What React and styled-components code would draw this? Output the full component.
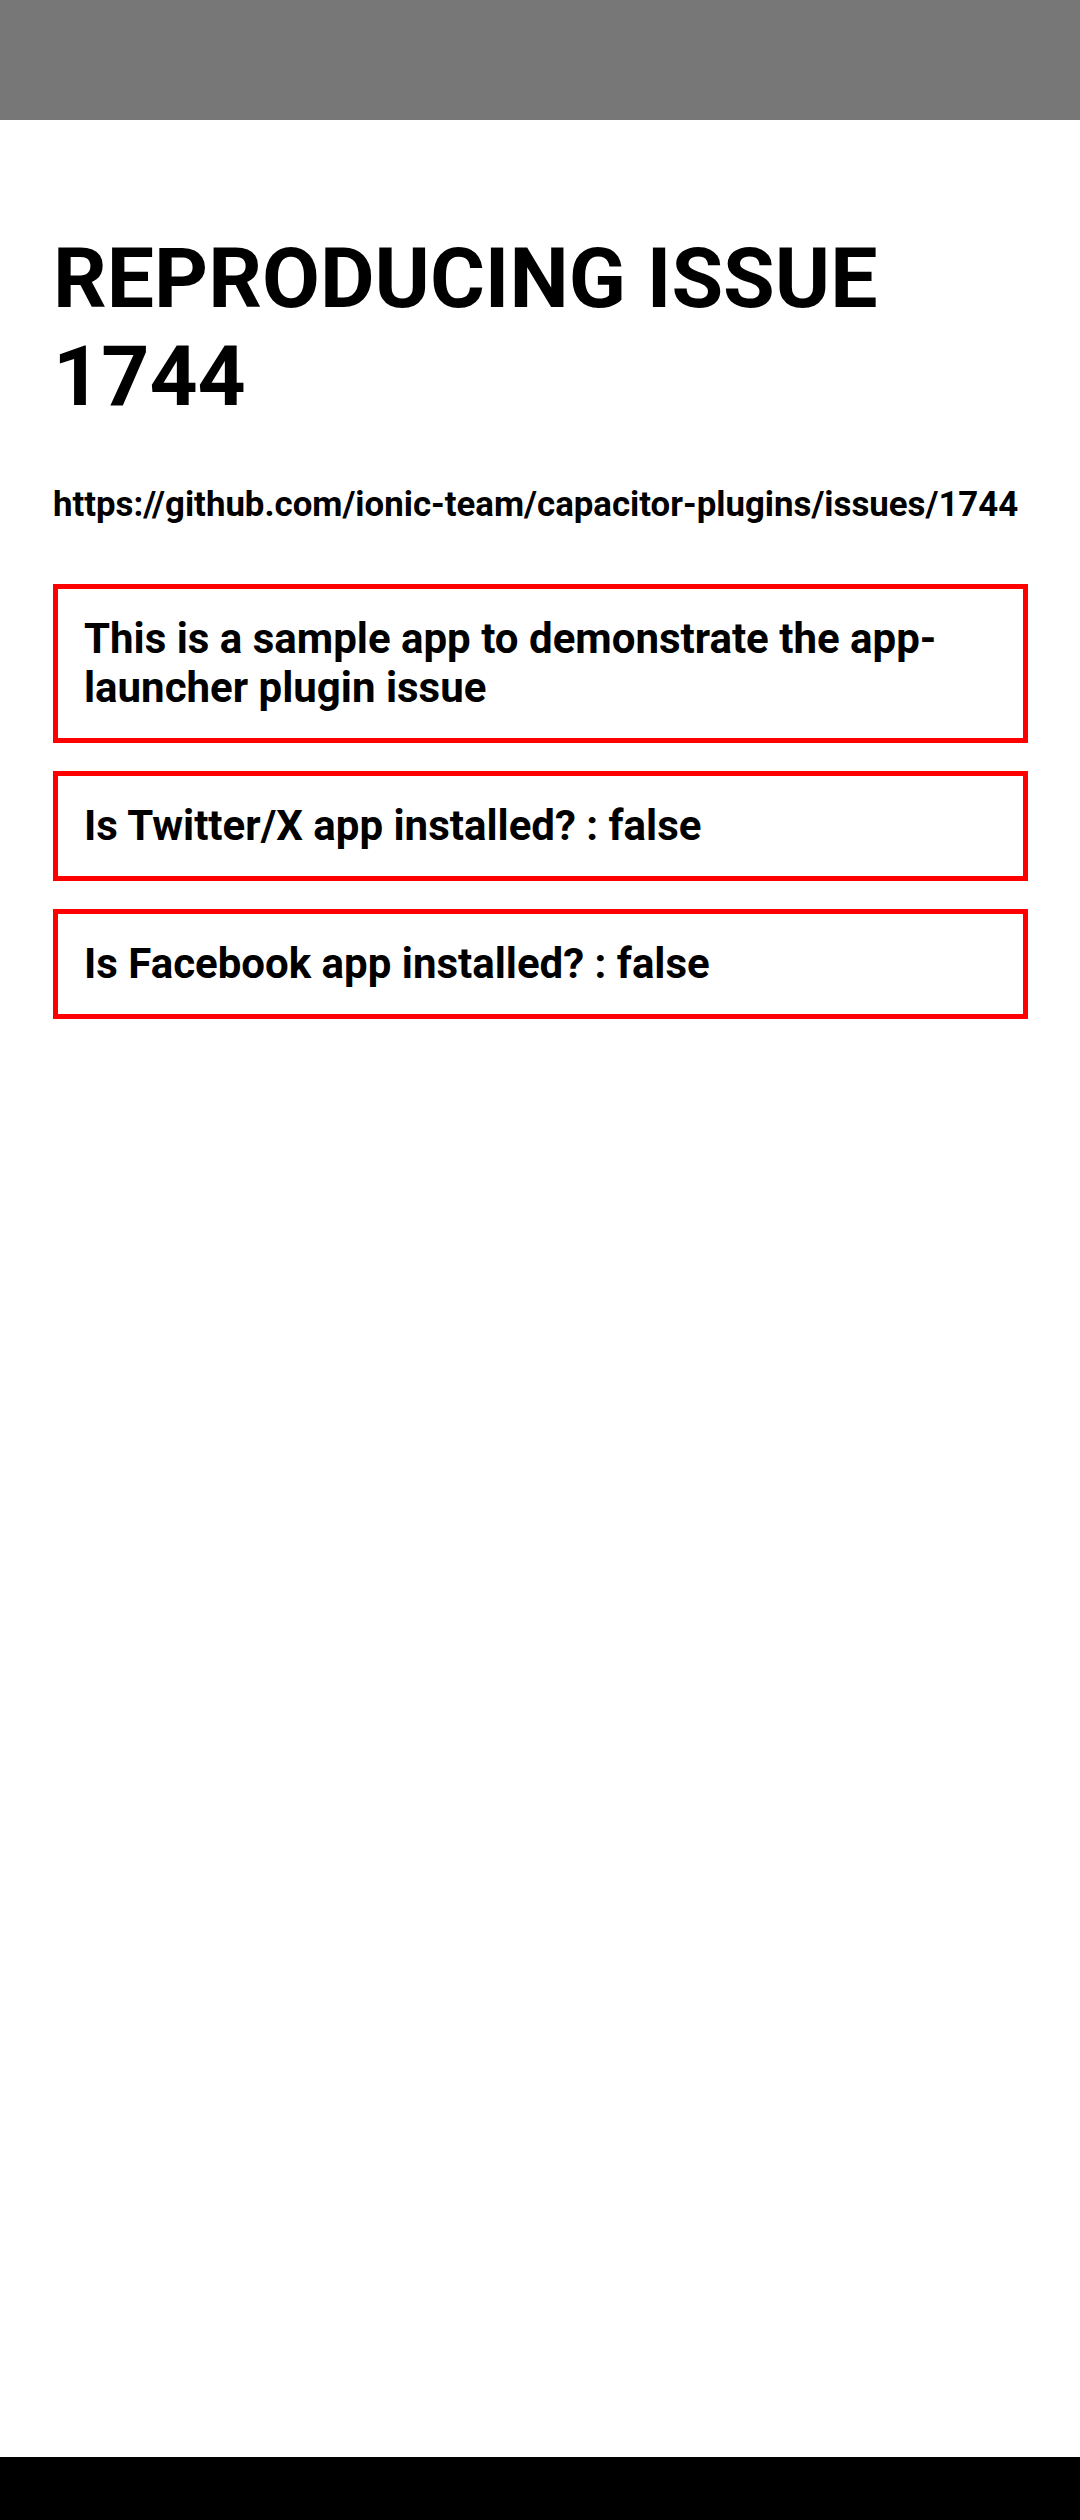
import React from 'react';
import styled, { createGlobalStyle } from 'styled-components';

const GlobalStyle = createGlobalStyle`
  html, body {
    margin: 0;
    padding: 0;
    background: #fff;
  }
  body {
    font-family: Roboto, "Liberation Sans", sans-serif;
    color: #000;
  }
`;

const rows = [
  'This is a sample app to demonstrate the app-launcher plugin issue',
  'Is Twitter/X app installed? : false',
  'Is Facebook app installed? : false',
];

const App = () => {
  return (
    <>
      <GlobalStyle />
      <StScreen>
        <StStatusBar />
        <StContent>
          <StTitle>REPRODUCING ISSUE 1744</StTitle>
          <StLink>https://github.com/ionic-team/capacitor-plugins/issues/1744</StLink>
          <StList>
            {rows.map((text) => (
              <StCard key={text}>{text}</StCard>
            ))}
          </StList>
        </StContent>
        <StNavBar />
      </StScreen>
    </>
  );
};

export default App;

const StScreen = styled.div`
  display: flex;
  flex-direction: column;
  min-height: 100vh;
  width: 100%;
`;

const StStatusBar = styled.div`
  height: 120px;
  background-color: #777777;
  flex-shrink: 0;
`;

const StContent = styled.main`
  flex: 1;
  display: flex;
  flex-direction: column;
  padding: 110px 52px 0 53px;
  box-sizing: border-box;
`;

const StTitle = styled.h1`
  margin: 0;
  font-size: 84px;
  font-weight: 700;
  line-height: 98px;
`;

const StLink = styled.div`
  margin-top: 58px;
  font-size: 34.8px;
  font-weight: 700;
  line-height: 41px;
  white-space: nowrap;
`;

const StList = styled.div`
  display: flex;
  flex-direction: column;
  gap: 28px;
  margin-top: 59px;
`;

const StCard = styled.div`
  border: 5px solid #ff0000;
  padding: 25px 26px 26px 26px;
  font-size: 42px;
  font-weight: 700;
  line-height: 49px;
`;

const StNavBar = styled.div`
  height: 63px;
  background-color: #000;
  flex-shrink: 0;
`;
